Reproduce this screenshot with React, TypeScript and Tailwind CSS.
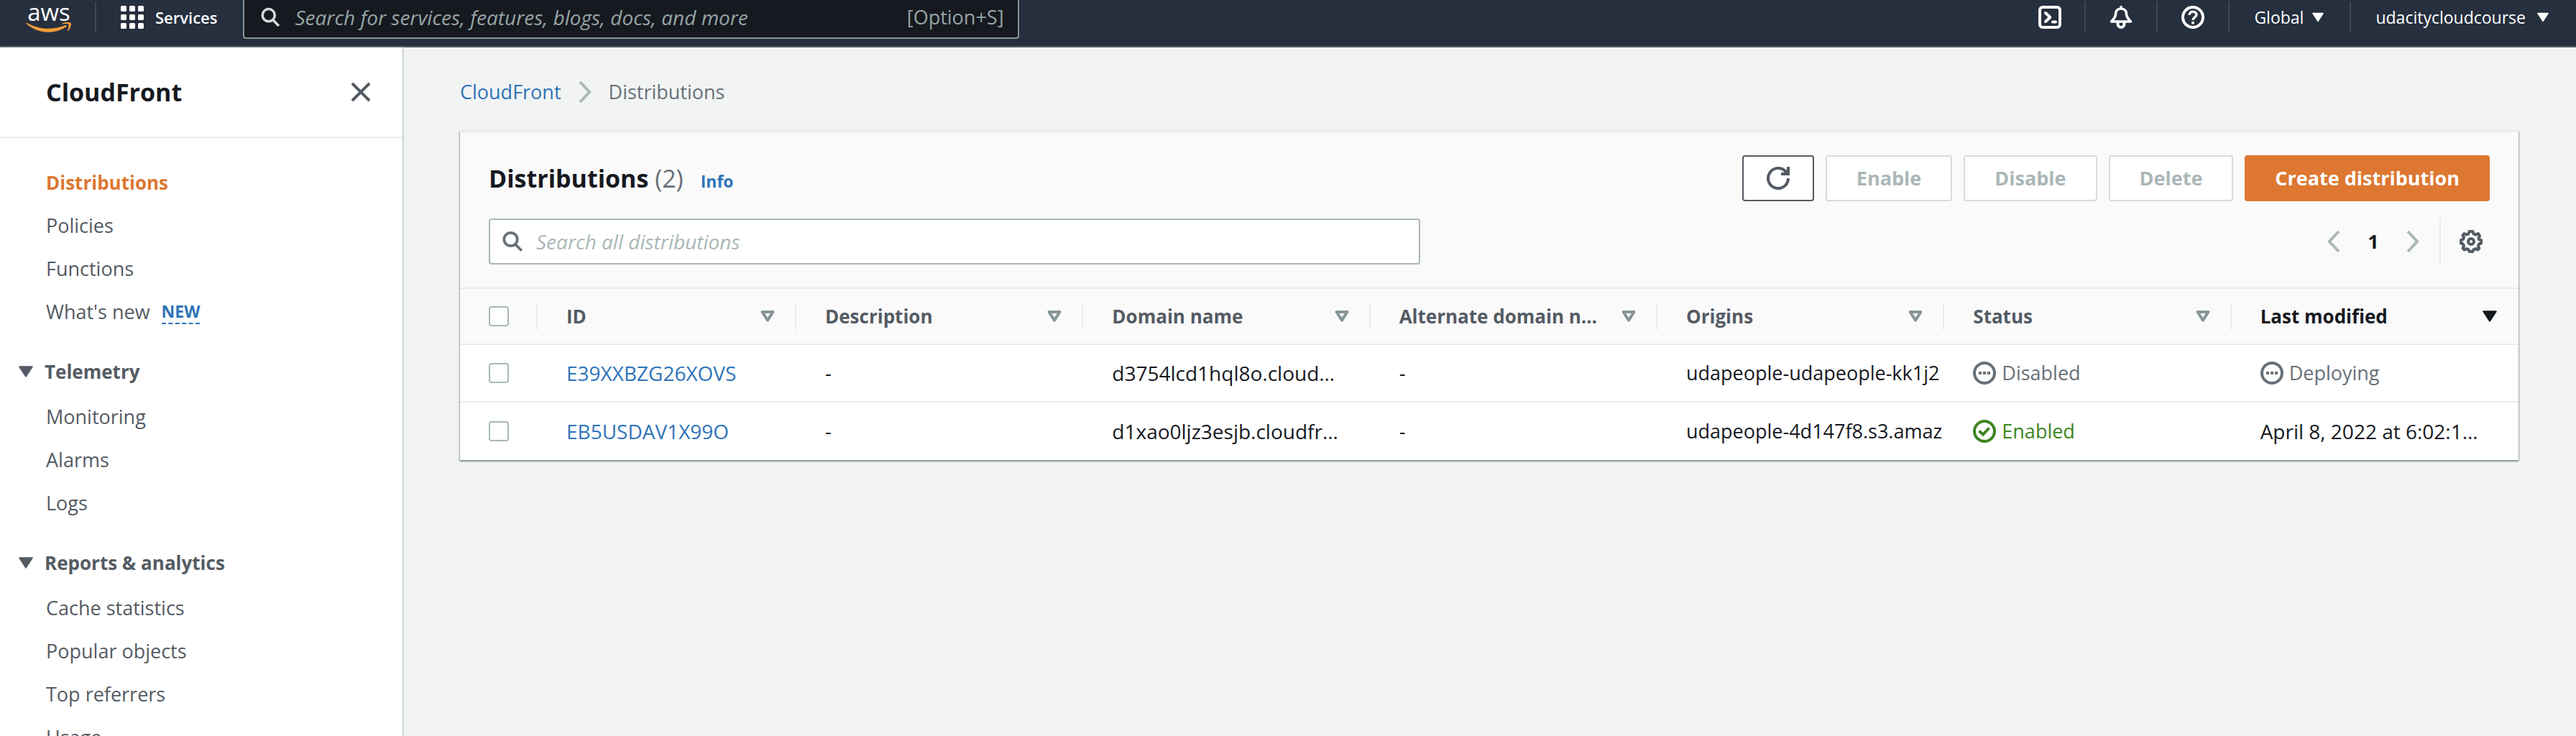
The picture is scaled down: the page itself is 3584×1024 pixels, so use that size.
import React from "react";

type NavLink = { label: string; active?: boolean; isNew?: boolean };
type NavSection = { title?: string; links: NavLink[] };

const NAV: NavSection[] = [
  {
    links: [
      { label: "Distributions", active: true },
      { label: "Policies" },
      { label: "Functions" },
      { label: "What's new", isNew: true },
    ],
  },
  { title: "Telemetry", links: [{ label: "Monitoring" }, { label: "Alarms" }, { label: "Logs" }] },
  {
    title: "Reports & analytics",
    links: [
      { label: "Cache statistics" },
      { label: "Popular objects" },
      { label: "Top referrers" },
      { label: "Usage" },
    ],
  },
];

const COLUMNS = [
  "ID",
  "Description",
  "Domain name",
  "Alternate domain n…",
  "Origins",
  "Status",
  "Last modified",
];

const ROWS = [
  {
    id: "E39XXBZG26XOVS",
    domain: "d3754lcd1hql8o.cloud…",
    origin: "udapeople-udapeople-kk1j2",
    enabled: false,
    modified: null,
  },
  {
    id: "EB5USDAV1X99O",
    domain: "d1xao0ljz3esjb.cloudfr…",
    origin: "udapeople-4d147f8.s3.amaz",
    enabled: true,
    modified: "April 8, 2022 at 6:02:1…",
  },
];

function SearchIcon({ className }: { className: string }) {
  return (
    <svg viewBox="0 0 16 16" className={className} fill="none" stroke="currentColor" strokeWidth="2" aria-hidden="true">
      <circle cx="6.7" cy="6.4" r="4.9" />
      <path d="M10 10l4.8 4.8" />
    </svg>
  );
}

function Caret({ className }: { className: string }) {
  return (
    <svg viewBox="0 0 20 16" className={className} fill="currentColor" stroke="currentColor" strokeWidth="2" strokeLinejoin="round" aria-hidden="true">
      <path d="M1.2 1.2h17.6L10 14.8z" />
    </svg>
  );
}

function SortIcon() {
  return (
    <svg viewBox="0 0 20 16" className="h-4 w-5 shrink-0 text-[#879596]" fill="none" stroke="currentColor" strokeWidth="4" strokeLinejoin="round" aria-hidden="true">
      <path d="M2.6 2h14.8L10 13.6z" />
    </svg>
  );
}

function Chevron({ className, left }: { className: string; left?: boolean }) {
  return (
    <svg viewBox="0 0 18 32" className={className} fill="none" stroke="currentColor" strokeWidth="4" aria-hidden="true">
      <path d={left ? "M16 2L2.800 16 16 30" : "M2 2l13.200 14L2 30"} />
    </svg>
  );
}

function AwsLogo() {
  return (
    <a href="#home" aria-label="AWS home" className="flex w-16 flex-col items-center text-white">
      <span className="text-[33px] leading-[28px]">aws</span>
      <svg viewBox="0 0 64 15" className="h-[15px] w-16 text-[#f29d38]" fill="currentColor" aria-hidden="true">
        <path d="M.4 1.400C.8.600 1.600.800 2.400 1.300c9 5 19 7.700 29.600 7.500 7.800-.1 16.300-1.800 23-4.700 1.500-.6 2.700 1 1.300 2C49.800 11 40.500 13.800 32 13.800 19.800 13.800 8.900 9.300.8 2.200.4 1.900.3 1.600.4 1.400z" />
        <path d="M59.400 2.900c-1-1.300-6.400-.8-8.400-.4-.7.100-.8-.5-.2-.9C54-.6 60.900 0 62.500 1c1.500 1-.4 8.100-3.800 11-.5.5-1 .2-.8-.4.8-1.900 2.400-7.400 1.500-8.700z" />
      </svg>
    </a>
  );
}

function CloudShellIcon() {
  return (
    <svg viewBox="0 0 16 16" className="size-8" fill="none" stroke="currentColor" strokeWidth="2" aria-hidden="true">
      <rect x="1" y="1" width="14" height="14" rx="2" />
      <path d="M5 5l3.200 3L5 11" strokeLinecap="round" strokeLinejoin="round" />
      <path d="M10 11.200h2" strokeLinecap="round" />
    </svg>
  );
}

function BellIcon() {
  return (
    <svg viewBox="0 0 32 32" className="size-8" fill="none" stroke="currentColor" strokeWidth="4" strokeLinejoin="round" aria-hidden="true">
      <path d="M16 0v4" strokeWidth="3" />
      <path d="M2.500 22C6 18 8.500 16 8.500 11.500 8.500 7 11.500 4 16 4s7.500 3 7.500 7.500C23.500 16 26 18 29.500 22z" strokeWidth="3.600" />
      <path d="M11.500 23v2.500a4.500 4.500 0 009 0V23" strokeWidth="4" />
    </svg>
  );
}

function HelpIcon() {
  return (
    <svg viewBox="0 0 32 32" className="size-8" fill="none" stroke="currentColor" strokeWidth="4" aria-hidden="true">
      <circle cx="16" cy="16" r="14" />
      <path d="M11 13c0-3 2.200-4.800 5-4.800s5 1.800 5 4.300c0 3.500-5 3.500-5 7.500" strokeWidth="3.400" />
      <path d="M14.200 22h3.600v3.600h-3.600z" fill="currentColor" stroke="none" />
    </svg>
  );
}

function GearIcon() {
  return (
    <svg viewBox="0 0 32 32" className="size-8" fill="none" stroke="currentColor" strokeWidth="4" strokeLinejoin="round" aria-hidden="true">
      <path d="M13.500 2h5l1 3.300 3.300 1.300 3-1.700L28 8.400l-1.600 3 .8 2L30 14v4.500l-3 1-1.200 3 1.500 3-2 2-3-1.300-3 1.200-1 2.600h-4.600l-1.200-2.700-3-1.200-3 1.400-2-2.200 1.500-3-1.200-2.900L2 18.500V14l2.800-.9 1.200-2.700-1.500-3 2-2.400 3 1.500 3-1.200z" />
      <circle cx="16" cy="16" r="4" />
    </svg>
  );
}

function RefreshIcon() {
  return (
    <svg viewBox="0 0 32 32" className="size-8" fill="none" stroke="currentColor" strokeWidth="4" aria-hidden="true">
      <path d="M30 16A14 14 0 1 1 26.500 6.800" />
      <path d="M30 0v10H20" />
      <path d="M24 8l6-6v8z" fill="currentColor" stroke="none" />
    </svg>
  );
}

function PendingIcon() {
  return (
    <svg viewBox="0 0 32 32" className="size-8 shrink-0" fill="none" stroke="currentColor" strokeWidth="4" aria-hidden="true">
      <circle cx="16" cy="16" r="14" />
      <path d="M8 16h4M14 16h4M20 16h4" />
    </svg>
  );
}

function SuccessIcon() {
  return (
    <svg viewBox="0 0 32 32" className="size-8 shrink-0" fill="none" stroke="currentColor" strokeWidth="4" aria-hidden="true">
      <circle cx="16" cy="16" r="14" />
      <path d="M8.500 15.500l5.500 5 8.500-9" />
    </svg>
  );
}

function Divider() {
  return <span className="h-11 w-0.5 shrink-0 bg-[#414750]" />;
}

function TopBar() {
  return (
    <header className="flex h-[66px] shrink-0 items-start justify-between border-b-2 border-[#545b64] bg-[#262f3e] text-white">
      <div className="flex h-12 items-center pl-9">
        <AwsLogo />
        <span className="ml-8 flex">
          <Divider />
        </span>
        <button type="button" className="ml-[34px] flex items-center gap-4 text-[22px] leading-8 font-semibold">
          <svg viewBox="0 0 32 32" className="size-8" fill="currentColor" aria-hidden="true">
            {[0, 12, 24].map((y) => [0, 12, 24].map((x) => <rect key={`${x}-${y}`} x={x} y={y} width="8" height="8" rx="1.500" />))}
          </svg>
          Services
        </button>
        <div className="ml-9 flex h-[54px] w-[1080px] items-center self-start rounded-b border-2 border-t-0 border-[#879596] bg-[#16191f] pr-5 pb-1 pl-[22px]">
          <SearchIcon className="size-7 shrink-0 text-[#d5dbdb]" />
          <input
            type="text"
            aria-label="Search AWS"
            placeholder="Search for services, features, blogs, docs, and more"
            className="ml-5 min-w-0 flex-1 bg-transparent text-[28px] leading-9 outline-none placeholder:text-[#95a5a6] placeholder:italic"
          />
          <span className="text-[27px] leading-9 text-[#95a5a6]">[Option+S]</span>
        </div>
      </div>
      <div className="flex h-12 items-center text-[23px] leading-8 font-medium">
        <button type="button" aria-label="CloudShell" className="px-8"><CloudShellIcon /></button>
        <Divider />
        <button type="button" aria-label="Notifications" className="px-[33px]"><BellIcon /></button>
        <Divider />
        <button type="button" aria-label="Help" className="px-[33px]"><HelpIcon /></button>
        <Divider />
        <button type="button" className="flex items-center gap-3 pr-9 pl-[34px]">
          Global <Caret className="h-3.5 w-4" />
        </button>
        <Divider />
        <button type="button" className="flex items-center gap-4 pr-[38px] pl-[34px]">
          udacitycloudcourse <Caret className="h-3.5 w-4" />
        </button>
      </div>
    </header>
  );
}

function Sidebar() {
  return (
    <aside className="z-10 w-[560px] shrink-0 overflow-hidden bg-white text-[#545b64] shadow-[1px_0_2px_0_#aab7b7]">
      <div className="flex h-[126px] items-center justify-between border-b-2 border-[#ebebeb] pr-11 pl-16">
        <h2 className="text-[34px] leading-10 font-bold text-[#16191f]">CloudFront</h2>
        <button type="button" aria-label="Close navigation">
          <svg viewBox="0 0 28 28" className="size-7" fill="none" stroke="currentColor" strokeWidth="4" aria-hidden="true">
            <path d="M2 2l24 24M26 2L2 26" />
          </svg>
        </button>
      </div>
      <nav aria-label="CloudFront" className="flex flex-col gap-6 pt-8">
        {NAV.map((section, i) => (
          <section key={i}>
            {section.title && (
              <button type="button" className="flex h-[62px] items-center gap-4 pb-1 pl-[26px] text-[26px] leading-9 font-bold">
                <Caret className="h-4 w-5" />
                {section.title}
              </button>
            )}
            <ul>
              {section.links.map((link) => (
                <li key={link.label} className="flex items-center py-3 pl-16 text-[27px] leading-9">
                  <a href="#nav" className={link.active ? "text-[26px] font-bold text-[#dd7731]" : ""}>
                    {link.label}
                  </a>
                  {link.isNew && (
                    <button type="button" className="ml-4 border-b-2 border-dashed border-[#2e73b8] text-[23px] leading-8 font-bold text-[#2e73b8]">
                      NEW
                    </button>
                  )}
                </li>
              ))}
            </ul>
          </section>
        ))}
      </nav>
    </aside>
  );
}

const CHECKBOX = "block size-7 appearance-none rounded border-2 border-[#aab7b7] bg-white checked:bg-[#2e73b8]";
const DISABLED_BUTTON = "h-16 rounded border-2 border-[#d5dbdb] bg-white px-[41px] text-[27px] leading-9 font-bold text-[#aab7b7]";

function Toolbar() {
  return (
    <div className="border-b-2 border-[#ebebeb] px-10 pt-8 pb-8">
      <div className="flex items-center justify-between">
        <div className="flex items-baseline">
          <h1 className="text-[34px] leading-10 font-bold">
            Distributions <span className="font-normal text-[#687078]">(2)</span>
          </h1>
          <a href="#info" className="ml-6 text-[23px] leading-8 font-bold text-[#2e73b8]">Info</a>
        </div>
        <div className="flex gap-4">
          <button type="button" aria-label="Refresh" className="flex h-16 w-[100px] items-center justify-center rounded border-2 border-[#545b64] bg-white text-[#545b64]">
            <RefreshIcon />
          </button>
          <button type="button" disabled className={DISABLED_BUTTON}>Enable</button>
          <button type="button" disabled className={DISABLED_BUTTON}>Disable</button>
          <button type="button" disabled className={DISABLED_BUTTON}>Delete</button>
          <button type="button" className="h-16 rounded bg-[#dd7731] px-[42px] text-[27px] leading-9 font-bold text-white">
            Create distribution
          </button>
        </div>
      </div>
      <div className="mt-6 flex items-center justify-between">
        <div className="flex h-16 w-[1296px] items-center rounded border-2 border-[#aab7b7] bg-white px-4">
          <SearchIcon className="size-[30px] shrink-0 text-[#687078]" />
          <input
            type="text"
            aria-label="Search all distributions"
            placeholder="Search all distributions"
            className="ml-[18px] min-w-0 flex-1 bg-transparent text-[28px] leading-9 outline-none placeholder:text-[#aab7b7] placeholder:italic"
          />
        </div>
        <div className="flex items-center text-[#aab7b7]">
          <button type="button" aria-label="Previous page"><Chevron left className="h-8 w-[18px]" /></button>
          <button type="button" className="w-[92px] text-center text-[27px] leading-9 font-bold text-[#16191f]">1</button>
          <button type="button" aria-label="Next page"><Chevron className="h-8 w-[18px]" /></button>
          <span className="mr-[26px] ml-7 h-16 w-0.5 bg-[#ebebeb]" />
          <button type="button" aria-label="Preferences" className="mr-2.5 text-[#545b64]"><GearIcon /></button>
        </div>
      </div>
    </div>
  );
}

function DistributionsTable() {
  return (
    <table className="w-full table-fixed border-separate border-spacing-0 text-left text-[27px] leading-9">
      <colgroup>
        <col className="w-[108px]" />
        <col className="w-[360px]" />
        <col /><col /><col /><col /><col /><col />
      </colgroup>
      <thead className="text-[26px] text-[#545b64]">
        <tr className="h-[78px] *:border-b-2 *:border-[#ebebeb]">
          <th className="p-0">
            <div className="flex h-[38px] items-center border-r-2 border-[#ebebeb] pl-10">
              <input type="checkbox" aria-label="Select all distributions" className={CHECKBOX} />
            </div>
          </th>
          {COLUMNS.map((name, i) => {
            const last = i === COLUMNS.length - 1;
            return (
              <th key={name} className="p-0 font-bold">
                <button
                  type="button"
                  className={
                    last
                      ? "flex h-[38px] w-full items-center justify-between pr-[30px] pl-10 text-[#16191f]"
                      : "flex h-[38px] w-full items-center justify-between border-r-2 border-[#ebebeb] pr-7 pl-10"
                  }
                >
                  <span className="whitespace-nowrap">{name}</span>
                  {last ? <Caret className="h-4 w-5" /> : <SortIcon />}
                </button>
              </th>
            );
          })}
        </tr>
      </thead>
      <tbody className="bg-white">
        {ROWS.map((row) => (
          <tr key={row.id} className="h-20 *:border-b-2 *:border-[#ebebeb] last:*:border-b-0">
            <td className="py-0 pr-0 pl-10">
              <input type="checkbox" aria-label={`Select ${row.id}`} className={CHECKBOX} />
            </td>
            <td className="py-0 pr-0 pl-10 text-[28px]">
              <a href="#distribution" className="text-[#2e73b8]">{row.id}</a>
            </td>
            <td className="py-0 pr-0 pl-10">-</td>
            <td className="overflow-hidden py-0 pr-0 pl-10 text-[28px] whitespace-nowrap">{row.domain}</td>
            <td className="py-0 pr-0 pl-10">-</td>
            <td className="overflow-hidden py-0 pr-0 pl-10 whitespace-nowrap">{row.origin}</td>
            <td className="py-0 pr-0 pl-10">
              {row.enabled ? (
                <span className="flex items-center gap-2 text-[#3c8520]"><SuccessIcon />Enabled</span>
              ) : (
                <span className="flex items-center gap-2 text-[#687078]"><PendingIcon />Disabled</span>
              )}
            </td>
            <td className="overflow-hidden py-0 pr-0 pl-10 whitespace-nowrap">
              {row.modified ? (
                <span className="text-[28px]">{row.modified}</span>
              ) : (
                <span className="flex items-center gap-2 text-[#687078]"><PendingIcon />Deploying</span>
              )}
            </td>
          </tr>
        ))}
      </tbody>
    </table>
  );
}

export default function App() {
  return (
    <div className="flex h-screen flex-col overflow-hidden bg-[#f2f4f4] font-['Open_Sans',sans-serif] text-[#16191f]">
      <TopBar />
      <div className="flex min-h-0 flex-1">
        <Sidebar />
        <main className="min-w-0 flex-1 px-20">
          <nav aria-label="Breadcrumb" className="flex h-[116px] items-center text-[27px] leading-9">
            <div className="mt-2 flex items-center">
              <a href="#cloudfront" className="text-[#2e73b8]">CloudFront</a>
              <Chevron className="mx-6 h-8 w-[18px] text-[#aab7b7]" />
              <span className="text-[#687078]">Distributions</span>
            </div>
          </nav>
          <section className="border-t-2 border-[#ebebeb] bg-[#fafafa] shadow-[0_2px_2px_0_#879596,1px_1px_2px_0_#aab7b7,-1px_1px_2px_0_#aab7b7]">
            <Toolbar />
            <DistributionsTable />
          </section>
        </main>
      </div>
    </div>
  );
}
